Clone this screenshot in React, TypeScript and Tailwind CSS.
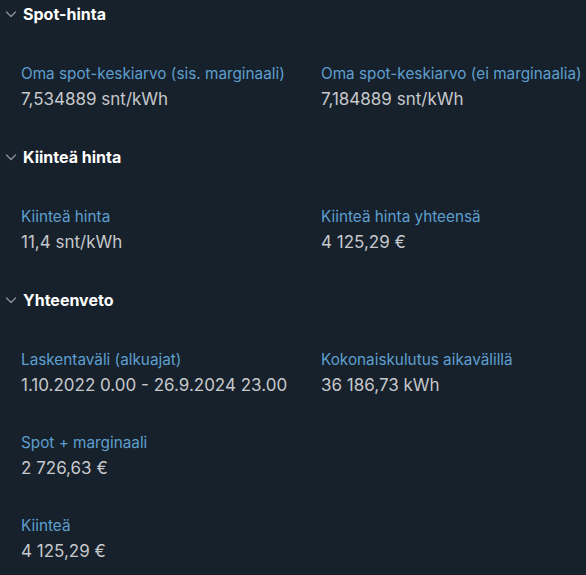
import React from 'react';

type Item = { label: string; value: string };

interface SectionProps {
  title: string;
  items: Item[];
}

const sections: SectionProps[] = [
  {
    title: 'Spot-hinta',
    items: [
      { label: 'Oma spot-keskiarvo (sis. marginaali)', value: '7,534889 snt/kWh' },
      { label: 'Oma spot-keskiarvo (ei marginaalia)', value: '7,184889 snt/kWh' },
    ],
  },
  {
    title: 'Kiinteä hinta',
    items: [
      { label: 'Kiinteä hinta', value: '11,4 snt/kWh' },
      { label: 'Kiinteä hinta yhteensä', value: '4 125,29 €' },
    ],
  },
  {
    title: 'Yhteenveto',
    items: [
      { label: 'Laskentaväli (alkuajat)', value: '1.10.2022 0.00 - 26.9.2024 23.00' },
      { label: 'Kokonaiskulutus aikavälillä', value: '36 186,73 kWh' },
      { label: 'Spot + marginaali', value: '2 726,63 €' },
      { label: '', value: '' },
      { label: 'Kiinteä', value: '4 125,29 €' },
    ],
  },
];

function Chevron() {
  return (
    <svg width="12" height="12" viewBox="0 0 12 12" fill="none" className="text-[#8b929a]">
      <path d="M1.5 4 L6 8.5 L10.5 4" stroke="currentColor" strokeWidth="1.3" strokeLinecap="round" strokeLinejoin="round" />
    </svg>
  );
}

function Section({ title, items }: SectionProps) {
  return (
    <section>
      <div className="flex h-7 items-center gap-[6px] pl-[5px]">
        <Chevron />
        <h2 className="text-[16px] font-bold text-white">{title}</h2>
      </div>
      <dl className="grid grid-cols-[300px_1fr] gap-y-[33px] pl-[21px] pt-[36px] pb-[29px]">
        {items.map((item, i) =>
          item.label ? (
            <div key={i} className="flex flex-col">
              <dt className="text-[15.3px] leading-5 text-[#5e9fcf]">{item.label}</dt>
              <dd className="text-[17px] leading-[30px] text-[#c6c8cb]">{item.value}</dd>
            </div>
          ) : (
            <div key={i} />
          ),
        )}
      </dl>
    </section>
  );
}

export default function App() {
  return (
    <div className="min-h-screen bg-[#17212b] font-['Inter',sans-serif] antialiased">
      {sections.map((s) => (
        <Section key={s.title} {...s} />
      ))}
    </div>
  );
}
